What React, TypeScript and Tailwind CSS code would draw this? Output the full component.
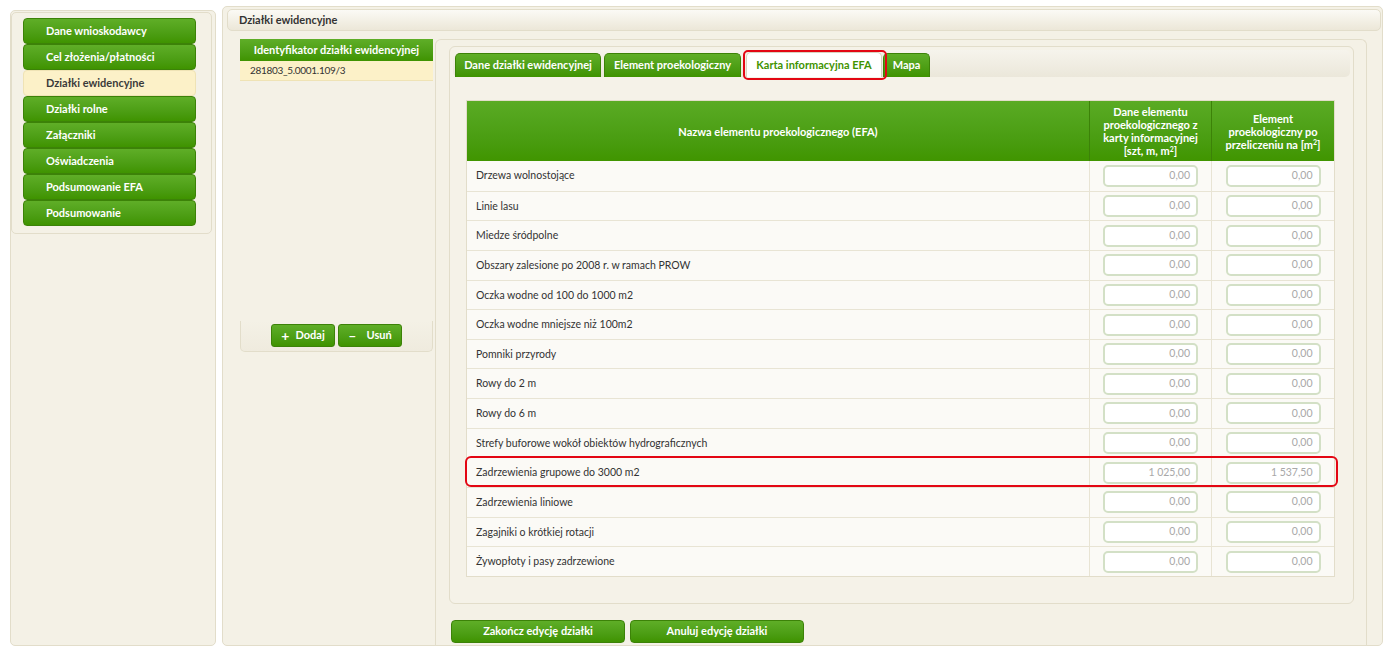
import React from "react";

const navItems = [
  "Dane wnioskodawcy",
  "Cel złożenia/płatności",
  "Działki ewidencyjne",
  "Działki rolne",
  "Załączniki",
  "Oświadczenia",
  "Podsumowanie EFA",
  "Podsumowanie",
];

const rows: [string, string, string][] = [
  ["Drzewa wolnostojące", "0,00", "0,00"],
  ["Linie lasu", "0,00", "0,00"],
  ["Miedze śródpolne", "0,00", "0,00"],
  ["Obszary zalesione po 2008 r. w ramach PROW", "0,00", "0,00"],
  ["Oczka wodne od 100 do 1000 m2", "0,00", "0,00"],
  ["Oczka wodne mniejsze niż 100m2", "0,00", "0,00"],
  ["Pomniki przyrody", "0,00", "0,00"],
  ["Rowy do 2 m", "0,00", "0,00"],
  ["Rowy do 6 m", "0,00", "0,00"],
  ["Strefy buforowe wokół obiektów hydrograficznych", "0,00", "0,00"],
  ["Zadrzewienia grupowe do 3000 m2", "1 025,00", "1 537,50"],
  ["Zadrzewienia liniowe", "0,00", "0,00"],
  ["Zagajniki o krótkiej rotacji", "0,00", "0,00"],
  ["Żywopłoty i pasy zadrzewione", "0,00", "0,00"],
];

const green =
  "bg-gradient-to-b from-[#5fae27] to-[#3f9300] border border-[#3c8208] text-white font-bold";

function Input({ v }: { v: string }) {
  return (
    <div className="w-[95px] h-[22px] rounded-[5px] border-2 border-[#d3e0c6] bg-white flex items-center justify-end pr-[6px] text-[10.5px] text-[#a8a8a8]">
      {v}
    </div>
  );
}

export default function App() {
  return (
    <div
      className="w-[1385px] h-[647px] bg-white flex overflow-hidden text-[#333]"
      style={{ fontFamily: 'Lato, "Open Sans", sans-serif' }}
    >
      {/* Left panel */}
      <div className="ml-[10px] mt-[10px] w-[206px] h-[636px] bg-[#f4f1e6] border border-[#e2ddca] rounded-[5px] flex flex-col">
        <div className="mt-[1px] w-[201px] h-[222px] border border-[#e2ddca] rounded-[5px] bg-[#f4f1e6] pt-[5px] pl-[11px]">
          {navItems.map((n, i) =>
            i === 2 ? (
              <div
                key={n}
                className="w-[173px] h-[26px] rounded-[4px] bg-[#fcf1c8] border border-[#efe3b5] flex items-center pl-[22px] text-[11px] font-bold text-[#3a3a3a]"
              >
                {n}
              </div>
            ) : (
              <div
                key={n}
                className={`w-[173px] h-[26px] rounded-[4px] ${green} flex items-center pl-[22px] text-[11px]`}
              >
                {n}
              </div>
            )
          )}
        </div>
      </div>

      {/* Right panel */}
      <div className="ml-[6px] mt-[6px] w-[1161px] h-[640px] bg-[#f4f1e6] border border-[#e2ddca] rounded-[5px] flex flex-col">
        <div className="mt-[2px] ml-[4px] mr-[1px] h-[22px] rounded-[5px] border border-[#e2ddca] bg-gradient-to-b from-[#fbfaf5] to-[#ece7d8] flex items-center pl-[11px] text-[11px] font-bold text-[#333]">
          Działki ewidencyjne
        </div>

        <div className="flex flex-1 mt-[8px]">
          {/* list column */}
          <div className="w-[212px] pl-[17px] flex flex-col">
            <div className={`w-[193px] h-[22px] ${green} border-0 flex items-center justify-center text-[11px]`}>
              Identyfikator działki ewidencyjnej
            </div>
            <div className="w-[193px] h-[20px] bg-[#fcf1c8] border-b border-[#efe3b5] flex items-center pl-[10px] text-[10px] tracking-[-0.3px] text-[#333]">
              281803_5.0001.109/3
            </div>
            <div className="mt-[240px] w-[193px] h-[31px] border-x border-b border-[#e2ddca] rounded-b-[5px] bg-gradient-to-b from-[#f4f1e6] to-[#efebde] flex items-start justify-center gap-[3px] pt-[3px]">
              <div className={`w-[64px] h-[23px] rounded-[3px] ${green} flex items-center justify-center gap-[6px] text-[11px]`}>
                <span className="text-[14px] leading-none">+</span>
                <span>Dodaj</span>
              </div>
              <div className={`w-[64px] h-[23px] rounded-[3px] ${green} flex items-center justify-center gap-[10px] text-[11px]`}>
                <span className="text-[14px] leading-none">–</span>
                <span>Usuń</span>
              </div>
            </div>
          </div>

          {/* main panel */}
          <div className="w-[932px] border-l border-t border-r border-[#e2ddca] rounded-tl-[6px] rounded-tr-[6px] flex flex-col">
            <div className="mt-[6px] ml-[13px] w-[905px] h-[558px] border border-[#e2ddca] rounded-[6px] bg-[#f5f2e8] flex flex-col">
              {/* tab bar */}
              <div className="mt-[3px] mx-[3px] h-[27px] rounded-[5px] bg-gradient-to-b from-[#f6f4ec] to-[#ebe7da] flex items-end pl-[2px] relative">
                <div className={`h-[24px] w-[146px] rounded-t-[5px] ${green} border-b-0 flex items-center justify-center text-[11px] mr-[3px]`}>
                  Dane działki ewidencyjnej
                </div>
                <div className={`h-[24px] w-[137px] rounded-t-[5px] ${green} border-b-0 flex items-center justify-center text-[11px] mr-[5px]`}>
                  Element proekologiczny
                </div>
                <div className="h-[25px] w-[136px] rounded-t-[5px] bg-white border border-b-0 border-[#d8d3c0] flex items-center justify-center text-[11px] font-bold text-[#3f9300] mr-[1px]">
                  Karta informacyjna EFA
                </div>
                <div className={`h-[24px] w-[47px] rounded-t-[5px] ${green} border-b-0 flex items-center justify-center text-[11px]`}>
                  Mapa
                </div>
                <div className="absolute left-[290px] top-[0px] w-[144px] h-[30px] border-2 border-[#e30613] rounded-[5px]" />
              </div>

              {/* table */}
              <div className="mt-[23px] ml-[16px] w-[869px] border border-[#e2ddca] bg-[#fbfaf6] relative">
                <div className="flex h-[60px] bg-gradient-to-b from-[#5aab24] to-[#409500] text-white font-bold text-[11px] leading-[13px]">
                  <div className="w-[623px] flex items-center justify-center border-r border-[#3c8208]">
                    Nazwa elementu proekologicznego (EFA)
                  </div>
                  <div className="w-[122px] flex items-center justify-center text-center border-r border-[#3c8208]">
                    <span>
                      Dane elementu
                      <br />
                      proekologicznego z
                      <br />
                      karty informacyjnej
                      <br />
                      [szt, m, m<sup className="text-[7px]">2</sup>]
                    </span>
                  </div>
                  <div className="flex-1 flex items-center justify-center text-center">
                    <span>
                      Element
                      <br />
                      proekologiczny po
                      <br />
                      przeliczeniu na [m<sup className="text-[7px]">2</sup>]
                    </span>
                  </div>
                </div>
                {rows.map(([n, a, b], i) => (
                  <div
                    key={n}
                    className={`flex h-[29.65px] ${i > 0 ? "border-t" : ""} border-[#e8e4d4] text-[10.5px] text-[#333]`}
                  >
                    <div className="w-[623px] flex items-center pl-[9px] pt-[1px] border-r border-[#e8e4d4]">
                      {n}
                    </div>
                    <div className="w-[122px] flex items-center justify-center border-r border-[#e8e4d4]">
                      <Input v={a} />
                    </div>
                    <div className="flex-1 flex items-center justify-center">
                      <Input v={b} />
                    </div>
                  </div>
                ))}
                <div className="absolute left-[-2px] top-[355px] w-[873px] h-[31px] border-2 border-[#e30613] rounded-[6px]" />
              </div>
            </div>

            <div className="mt-[16px] ml-[15px] flex gap-[5px]">
              <div className={`w-[174px] h-[23px] rounded-[4px] ${green} flex items-center justify-center text-[11px]`}>
                Zakończ edycję działki
              </div>
              <div className={`w-[174px] h-[23px] rounded-[4px] ${green} flex items-center justify-center text-[11px]`}>
                Anuluj edycję działki
              </div>
            </div>
          </div>
        </div>
      </div>
    </div>
  );
}
